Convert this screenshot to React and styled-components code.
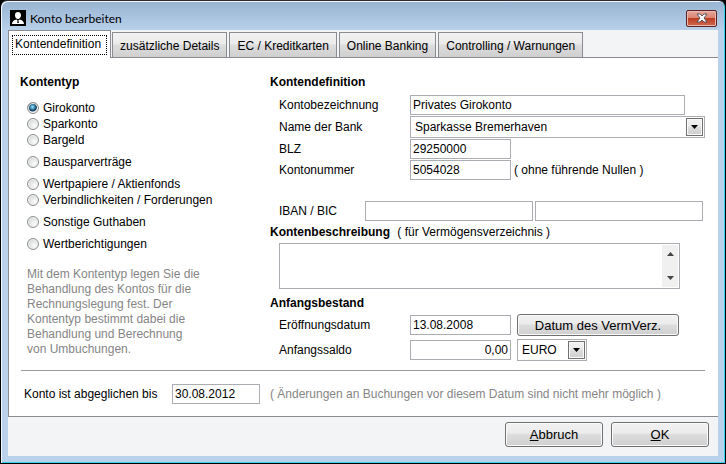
import React, { useState } from "react";
import styled, { createGlobalStyle } from "styled-components";

const GlobalStyle = createGlobalStyle`
  * {
    box-sizing: border-box;
  }
  body {
    margin: 0;
    background: #000;
  }
  body, button, input, select, textarea {
    font-family: "Liberation Sans", Arial, sans-serif;
    font-size: 12px;
    color: #000;
  }
`;

const Window = styled.div`
  min-height: 100vh;
  display: flex;
  flex-direction: column;
  padding: 0 7px 7px;
  border: 1px solid #000;
  border-top-color: #2a2a30;
  border-radius: 7px 7px 0 0;
  background: linear-gradient(#98b4d2, #b9d1ea 30px, #b9d1ea);
  box-shadow: inset 1px 1px #f4f8fc, inset -1px -1px #35d3ea;
`;

const TitleBar = styled.header`
  height: 29px;
  display: flex;
  align-items: center;
  gap: 4px;
  padding: 5px 1px 0 2px;
`;

const Title = styled.h1`
  flex: 1;
  margin: 0;
  font-family: Lato, "Open Sans", sans-serif;
  font-size: 12px;
  font-weight: 400;
`;

const CloseButton = styled.button`
  width: 31px;
  height: 17px;
  display: flex;
  align-items: center;
  justify-content: center;
  padding: 0;
  border: 1px solid #5c2226;
  border-radius: 2px;
  background: linear-gradient(#e5a79b, #d98573 45%, #bd3c22 50%, #cf6a52);
  box-shadow: inset 0 0 0 1px #eab9ae;
`;

const Client = styled.form`
  flex: 1;
  display: flex;
  flex-direction: column;
  margin: 0;
  background: #f3f4f6;
`;

const TabBar = styled.nav`
  height: 28px;
  display: flex;
  align-items: flex-end;
  gap: 2px;
  box-shadow: inset 0 -1px #8b8c92;
`;

const Tab = styled.button`
  height: ${(props) => (props.$active ? 28 : 26)}px;
  padding: 0 ${(props) => (props.$active ? 3 : 4)}px;
  margin-right: ${(props) => (props.$active ? -1 : 0)}px;
  border: 1px solid #8b8c92;
  border-bottom-width: ${(props) => (props.$active ? 0 : 1)}px;
  background: ${(props) =>
    props.$active ? "#fff" : "linear-gradient(#f2f2f2, #ebebeb 45%, #dddddd 50%, #cfcfcf)"};
  white-space: nowrap;

  span {
    display: block;
    padding: ${(props) => (props.$active ? "1px 5px 3px 2px" : "1px 2px 0")};
    border: 1px dotted ${(props) => (props.$active ? "#000" : "transparent")};
  }
`;

const Panel = styled.main`
  flex: 1;
  display: flex;
  flex-direction: column;
  border: solid #8b8c92;
  border-width: 0 0 1px 1px;
  background: #fff;
  padding: 16px 13px 11px 11px;
`;

const Columns = styled.div`
  display: flex;
  padding-bottom: 9px;
`;

const Left = styled.section`
  width: 250px;
`;

const Right = styled.section`
  flex: 1;
`;

const Heading = styled.h2`
  display: block;
  margin: 0;
  font-size: 12px;
  line-height: 16px;
  font-weight: bold;

  span {
    font-weight: 400;
    margin-left: 4px;
  }
`;

const RadioGroups = styled.div`
  display: flex;
  flex-direction: column;
  gap: 6px;
  padding: 10px 0 0 7px;
`;

const RadioLabel = styled.label`
  height: 16px;
  display: flex;
  align-items: center;
  gap: 4px;
`;

const Radio = styled.input`
  appearance: none;
  width: 12px;
  height: 12px;
  margin: 0;
  border: 1px solid #8e8f8f;
  border-radius: 50%;
  background: radial-gradient(circle at 65% 65%, #fdfdfd, #c4c8cc);
  box-shadow: inset 0 0 0 1px #f4f4f4;

  &:checked {
    background: radial-gradient(circle at 45% 40%, #bfeaf8 0, #3d93bd 2px, #12354f 4px, #e4e8ea 5px);
  }
`;

const Note = styled.p`
  margin: 15px 0 0 7px;
  line-height: 15px;
  color: #858585;
`;

const Fields = styled.div`
  display: flex;
  flex-direction: column;
  gap: ${(props) => props.$gap || 1}px;
  padding: ${(props) => props.$top}px 0 0 9px;
`;

const Row = styled.div`
  display: flex;
  align-items: center;
`;

const Label = styled.label`
  width: ${(props) => props.$width || 131}px;
  flex-shrink: 0;
`;

const Input = styled.input`
  width: ${(props) => (props.$width ? props.$width + "px" : "auto")};
  flex: ${(props) => (props.$width ? "none" : "1 1 0")};
  min-width: 0;
  height: 20px;
  margin: 0 ${(props) => props.$after || 0}px 0 0;
  padding: 0 2px;
  border: 1px solid #abadb3;
  background: #fff;
  text-align: ${(props) => props.$align || "left"};
`;

const SelectBox = styled.div`
  position: relative;
  width: ${(props) => (props.$width ? props.$width + "px" : "auto")};
  flex: ${(props) => (props.$width ? "none" : "1")};

  select {
    appearance: none;
    display: block;
    width: 100%;
    height: 22px;
    margin: 0;
    padding: 0 20px 0 4px;
    border: 1px solid #abadb3;
    border-radius: 0;
    background: #fff;
  }
`;

const DropArrow = styled.span`
  position: absolute;
  top: 2px;
  right: 2px;
  bottom: 2px;
  width: 17px;
  display: flex;
  align-items: center;
  justify-content: center;
  border: 1px solid #707070;
  background: linear-gradient(#f2f2f2, #ebebeb 45%, #dddddd 50%, #cfcfcf);
  box-shadow: inset 0 0 0 1px #fafafa;
  pointer-events: none;
`;

const TextBox = styled.div`
  height: 46px;
  display: flex;
  margin: 3px 25px 6px 9px;
  padding: 1px;
  border: 1px solid #abadb3;

  textarea {
    flex: 1;
    min-width: 0;
    padding: 1px;
    border: 0;
    resize: none;
    overflow: hidden;
  }
`;

const ScrollBar = styled.div`
  width: 16px;
  display: flex;
  flex-direction: column;
  align-items: center;
  justify-content: space-between;
  padding: 7px 0;
  background: #f0f0f0;
`;

const Button = styled.button`
  width: ${(props) => props.$width}px;
  height: ${(props) => props.$height}px;
  padding: 0;
  border: 1px solid #707070;
  border-radius: 3px;
  background: linear-gradient(#f2f2f2, #ebebeb 45%, #dddddd 50%, #cfcfcf);
  box-shadow: inset 0 0 0 1px #fafafa;
  font-size: 13px;
`;

const Reconciled = styled.div`
  display: flex;
  align-items: center;
  padding: 13px 0 0 3px;
  margin: 0 0 0 1px;
  border-top: 1px solid #9a9a9a;
`;

const Hint = styled.span`
  color: ${(props) => (props.$muted ? "#858585" : "#000")};
`;

const Footer = styled.footer`
  display: flex;
  justify-content: flex-end;
  gap: 8px;
  padding: 5px 9px 9px;
`;

const tabs = [
  "Kontendefinition",
  "zusätzliche Details",
  "EC / Kreditkarten",
  "Online Banking",
  "Controlling / Warnungen",
];

const accountTypes = [
  ["Girokonto", "Sparkonto", "Bargeld"],
  ["Bausparverträge"],
  ["Wertpapiere / Aktienfonds", "Verbindlichkeiten / Forderungen"],
  ["Sonstige Guthaben"],
  ["Wertberichtigungen"],
];

const Arrow = ({ up, color = "#000" }) => (
  <svg width="7" height="4" viewBox="0 0 7 4">
    <path d={up ? "M0 4 3.5 0 7 4z" : "M0 0h7L3.5 4z"} fill={color} />
  </svg>
);

const App = () => {
  const [tab, setTab] = useState(tabs[0]);
  const [type, setType] = useState("Girokonto");

  return (
    <>
      <GlobalStyle />
      <Window>
        <TitleBar>
          <svg width="16" height="16" viewBox="0 0 16 16">
            <path d="M0 0h16v16H0z" />
            <path
              d="M8 2c2 0 3 1.300 3 3.200S9.700 9 8 9 5 7.200 5 5.200 6 2 8 2zM2 14c0-3 2-4 4.500-4.600L8 11l1.500-1.600C12 10 14 11 14 14z"
              fill="#fff"
            />
            <path d="M7.500 11h1l.4 2H7.100z" />
          </svg>
          <Title>Konto bearbeiten</Title>
          <CloseButton type="button" aria-label="Schließen">
            <svg width="12" height="10" viewBox="0 0 12 10">
              <path
                d="M1 1h3l2 2 2-2h3L8 5l3 4H8L6 7 4 9H1l3-4z"
                fill="#fff"
                stroke="#5a5560"
              />
            </svg>
          </CloseButton>
        </TitleBar>
        <Client onSubmit={(e) => e.preventDefault()}>
          <TabBar>
            {tabs.map((name) => (
              <Tab key={name} type="button" $active={name === tab} onClick={() => setTab(name)}>
                <span>{name}</span>
              </Tab>
            ))}
          </TabBar>
          <Panel>
            <Columns>
              <Left>
                <Heading>Kontentyp</Heading>
                <RadioGroups>
                  {accountTypes.map((group) => (
                    <div key={group[0]}>
                      {group.map((name) => (
                        <RadioLabel key={name}>
                          <Radio
                            type="radio"
                            name="type"
                            checked={type === name}
                            onChange={() => setType(name)}
                          />
                          {name}
                        </RadioLabel>
                      ))}
                    </div>
                  ))}
                </RadioGroups>
                <Note>
                  Mit dem Kontentyp legen Sie die
                  <br />
                  Behandlung des Kontos für die
                  <br />
                  Rechnungslegung fest. Der
                  <br />
                  Kontentyp bestimmt dabei die
                  <br />
                  Behandlung und Berechnung
                  <br />
                  von Umbuchungen.
                </Note>
              </Left>
              <Right>
                <Heading>Kontendefinition</Heading>
                <Fields $top={5}>
                  <Row>
                    <Label htmlFor="name">Kontobezeichnung</Label>
                    <Input id="name" defaultValue="Privates Girokonto" $after={20} />
                  </Row>
                  <Row>
                    <Label htmlFor="bank">Name der Bank</Label>
                    <SelectBox>
                      <select id="bank">
                        <option>Sparkasse Bremerhaven</option>
                      </select>
                      <DropArrow>
                        <Arrow />
                      </DropArrow>
                    </SelectBox>
                  </Row>
                  <Row>
                    <Label htmlFor="blz">BLZ</Label>
                    <Input id="blz" defaultValue="29250000" $width={101} />
                  </Row>
                  <Row>
                    <Label htmlFor="number">Kontonummer</Label>
                    <Input id="number" defaultValue="5054028" $width={101} $after={3} />
                    <Hint>( ohne führende Nullen )</Hint>
                  </Row>
                </Fields>
                <Fields $top={21}>
                  <Row>
                    <Label htmlFor="iban" $width={86}>
                      IBAN / BIC
                    </Label>
                    <Input id="iban" $after={2} />
                    <Input aria-label="BIC" $after={2} />
                  </Row>
                </Fields>
                <Fields $top={3} />
                <Heading as="label" htmlFor="description">
                  Kontenbeschreibung <span>( für Vermögensverzeichnis )</span>
                </Heading>
                <TextBox>
                  <textarea id="description" />
                  <ScrollBar>
                    <Arrow up color="#444" />
                    <Arrow color="#444" />
                  </ScrollBar>
                </TextBox>
                <Heading>Anfangsbestand</Heading>
                <Fields $top={3} $gap={3}>
                  <Row>
                    <Label htmlFor="opened">Eröffnungsdatum</Label>
                    <Input id="opened" defaultValue="13.08.2008" $width={101} $after={6} />
                    <Button type="button" $width={162} $height={22}>
                      Datum des VermVerz.
                    </Button>
                  </Row>
                  <Row>
                    <Label htmlFor="balance">Anfangssaldo</Label>
                    <Input id="balance" defaultValue="0,00" $width={101} $after={6} $align="right" />
                    <SelectBox $width={70}>
                      <select aria-label="Währung">
                        <option>EURO</option>
                      </select>
                      <DropArrow>
                        <Arrow />
                      </DropArrow>
                    </SelectBox>
                  </Row>
                </Fields>
              </Right>
            </Columns>
            <Reconciled>
              <Label htmlFor="until" $width={148}>
                Konto ist abgeglichen bis
              </Label>
              <Input id="until" defaultValue="30.08.2012" $width={88} $after={10} />
              <Hint $muted>( Änderungen an Buchungen vor diesem Datum sind nicht mehr möglich )</Hint>
            </Reconciled>
          </Panel>
          <Footer>
            <Button type="button" $width={98} $height={25}>
              <u>A</u>bbruch
            </Button>
            <Button type="submit" $width={98} $height={25}>
              <u>O</u>K
            </Button>
          </Footer>
        </Client>
      </Window>
    </>
  );
};

export default App;
